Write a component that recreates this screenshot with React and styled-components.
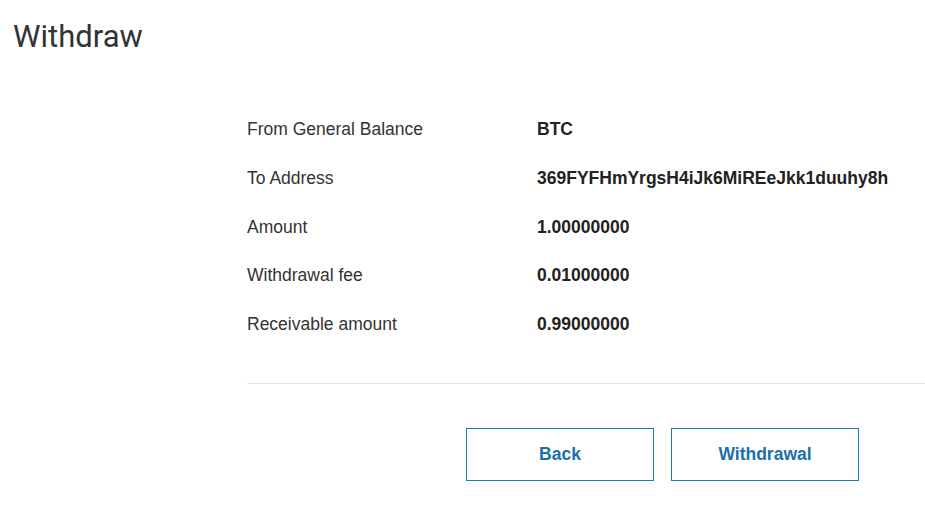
import styled, { createGlobalStyle } from 'styled-components';

const GlobalStyle = createGlobalStyle`
  html, body {
    margin: 0;
    padding: 0;
    background: #ffffff;
  }
  body {
    font-family: "Liberation Sans", Arial, sans-serif;
    color: #333333;
  }
`;

const Page = styled.div`
  padding: 18px 0 0 13px;
`;

const Title = styled.h1`
  margin: 0;
  font-family: Roboto, "Noto Sans", sans-serif;
  font-weight: 400;
  font-size: 31px;
  line-height: 38px;
  color: #333333;
`;

const Panel = styled.div`
  margin: 63px 0 0 234px;
`;

const Details = styled.dl`
  display: grid;
  grid-template-columns: 290px 1fr;
  grid-auto-rows: 48.75px;
  margin: 0;
`;

const Label = styled.dt`
  font-size: 17.5px;
  line-height: 20px;
  color: #333333;
`;

const Value = styled.dd`
  margin: 0;
  font-size: 17.5px;
  line-height: 20px;
  font-weight: 700;
  color: #222222;
`;

const Divider = styled.hr`
  margin: 20px 0 0;
  border: 0;
  border-top: 1px solid #e5e5e5;
`;

const Actions = styled.div`
  display: flex;
  gap: 17px;
  padding: 44px 0 0 219px;
`;

const Button = styled.button`
  width: 188px;
  height: 53px;
  background: #ffffff;
  border: 1px solid #1a7bb9;
  color: #1a70aa;
  font-family: "Liberation Sans", Arial, sans-serif;
  font-size: 17.5px;
  font-weight: 700;
  cursor: pointer;
`;

const rows = [
  ['From General Balance', 'BTC'],
  ['To Address', '369FYFHmYrgsH4iJk6MiREeJkk1duuhy8h'],
  ['Amount', '1.00000000'],
  ['Withdrawal fee', '0.01000000'],
  ['Receivable amount', '0.99000000'],
];

export default function App() {
  return (
    <>
      <GlobalStyle />
      <Page>
        <Title>Withdraw</Title>
        <Panel>
          <Details>
            {rows.map(([label, value]) => [
              <Label key={label}>{label}</Label>,
              <Value key={label + '-v'}>{value}</Value>,
            ])}
          </Details>
          <Divider />
          <Actions>
            <Button>Back</Button>
            <Button>Withdrawal</Button>
          </Actions>
        </Panel>
      </Page>
    </>
  );
}
